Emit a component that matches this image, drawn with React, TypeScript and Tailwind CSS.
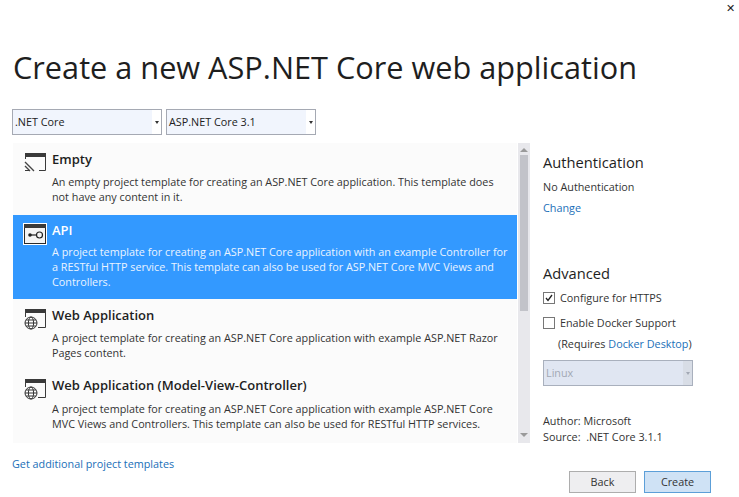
const font = "font-['Open_Sans','Noto_Sans',sans-serif]";

function TemplateIcon({ kind }: { kind: "empty" | "api" | "web" }) {
  if (kind === "api") {
    return (
      <svg width="24" height="22" viewBox="0 0 24 22" className="bg-white">
        <rect x="1.5" y="1.5" width="21" height="19" fill="#f4f4f4" stroke="#2a2a2a" />
        <rect x="1" y="1" width="22" height="4" fill="#3a3a3a" />
        <circle cx="7" cy="12" r="1.8" fill="#222" />
        <path d="M8 12h6" stroke="#222" strokeWidth="1.2" />
        <circle cx="16.5" cy="12" r="3" fill="none" stroke="#222" strokeWidth="1.2" />
      </svg>
    );
  }
  if (kind === "empty") {
    return (
      <svg width="24" height="20" viewBox="0 0 24 20">
        <rect x="2" y="1" width="21" height="4" fill="#3a3a3a" />
        <path d="M2.5 5v2M22.5 5v13.5H16M2 18.5h5" stroke="#3a3a3a" fill="none" />
        <path d="M2 10l9 9M2 14l5 5" stroke="#444" strokeWidth="1.4" fill="none" />
      </svg>
    );
  }
  return (
    <svg width="24" height="22" viewBox="0 0 24 22">
      <rect x="2" y="1" width="21" height="4" fill="#3a3a3a" />
      <path d="M2.5 5v4M22.5 5v14.5H15" stroke="#3a3a3a" fill="none" />
      <g stroke="#333" fill="#fff" strokeWidth="1">
        <circle cx="8" cy="15" r="6" />
        <ellipse cx="8" cy="15" rx="2.6" ry="6" fill="none" />
        <path d="M2 15h12M3 12h10M3 18h10" fill="none" />
      </g>
    </svg>
  );
}

function Template({
  kind,
  title,
  lines,
  selected,
  className,
  gap,
}: {
  kind: "empty" | "api" | "web";
  title: string;
  lines: string[];
  selected?: boolean;
  className: string;
  gap: string;
}) {
  return (
    <div className={`flex pl-[10px] pr-2 ${className} ${selected ? "bg-[#3399ff] text-white" : "text-[#333]"}`}>
      <div className="w-[29px] shrink-0 pt-[2px]">
        <TemplateIcon kind={kind} />
      </div>
      <div className="min-w-0">
        <div className={`text-[13px] leading-[18px] font-semibold ${selected ? "text-white" : "text-[#1e1e1e]"}`}>{title}</div>
        <div className={`${gap} text-[10.8px] leading-[15px] whitespace-nowrap ${selected ? "text-[#eaf4ff]" : ""}`}>
          {lines.map((l) => (
            <div key={l}>{l}</div>
          ))}
        </div>
      </div>
    </div>
  );
}

function Dropdown({ label, width }: { label: string; width: string }) {
  return (
    <div className={`flex h-[26px] ${width} border border-[#a5a9b3] bg-white`}>
      <div className="flex flex-1 items-center bg-[#f1f5fd] pl-[2px] pt-[1px] text-[10.8px] text-[#222]">{label}</div>
      <div className="flex w-[9px] items-center justify-center">
        <div className="h-0 w-0 border-x-[2px] border-t-[3px] border-x-transparent border-t-[#333]" />
      </div>
    </div>
  );
}

export default function App() {
  return (
    <div className={`${font} relative h-[497px] w-[739px] overflow-hidden bg-white text-[#333]`}>
      <div className="absolute right-[4px] top-[3px] text-[11px] leading-[10px] text-[#222]">✕</div>

      <div className="px-[12px] pt-[44px]">
        <h1 className="h-[48px] pl-px text-[30.7px] leading-[46px] text-[#1e1e1e]">Create a new ASP.NET Core web application</h1>

        <div className="mt-[17px] flex gap-[4px]">
          <Dropdown label=".NET Core" width="w-[150px]" />
          <Dropdown label="ASP.NET Core 3.1" width="w-[150px]" />
        </div>

        <div className="mt-[8px] flex">
          <div className="flex h-[300px] w-[518px] pl-px">
            <div className="w-[504px] shrink-0 bg-[#fbfbfb]">
              <Template
                kind="empty"
                title="Empty"
                className="h-[72px] pt-[7px]"
                gap="mt-[6px]"
                lines={[
                  "An empty project template for creating an ASP.NET Core application. This template does",
                  "not have any content in it.",
                ]}
              />
              <Template
                kind="api"
                title="API"
                selected
                className="h-[84px] pt-[6px]"
                gap="mt-[5px]"
                lines={[
                  "A project template for creating an ASP.NET Core application with an example Controller for",
                  "a RESTful HTTP service. This template can also be used for ASP.NET Core MVC Views and",
                  "Controllers.",
                ]}
              />
              <Template
                kind="web"
                title="Web Application"
                className="h-[71px] pt-[7px]"
                gap="mt-[6px]"
                lines={[
                  "A project template for creating an ASP.NET Core application with example ASP.NET Razor",
                  "Pages content.",
                ]}
              />
              <Template
                kind="web"
                title="Web Application (Model-View-Controller)"
                className="h-[73px] pt-[6px]"
                gap="mt-[7px]"
                lines={[
                  "A project template for creating an ASP.NET Core application with example ASP.NET Core",
                  "MVC Views and Controllers. This template can also be used for RESTful HTTP services.",
                ]}
              />
            </div>
            <div className="ml-px flex w-[12px] shrink-0 flex-col items-center bg-[#e8e8ec]">
              <div className="mt-[5px] h-0 w-0 border-x-[4px] border-b-[4px] border-x-transparent border-b-[#9a9a9a]" />
              <div className="mt-[3px] h-[156px] w-[8px] bg-[#c2c3c9]" />
              <div className="mt-auto mb-[6px] h-0 w-0 border-x-[4px] border-t-[4px] border-x-transparent border-t-[#9a9a9a]" />
            </div>
          </div>

          <div className="ml-[13px] w-[170px] text-[10.8px]">
            <div className="mt-[9px] text-[14.7px] leading-[20px] font-medium text-[#1e1e1e]">Authentication</div>
            <div className="mt-[7px] leading-[16px]">No Authentication</div>
            <div className="mt-[5px] leading-[16px] text-[#1a6fb8]">Change</div>

            <div className="mt-[47px] text-[14.7px] leading-[20px] font-medium text-[#1e1e1e]">Advanced</div>
            <div className="mt-[7px] flex items-center gap-[5px] leading-[16px]">
              <div className="flex h-[12px] w-[12px] items-center justify-center border border-[#777] bg-white">
                <svg width="10" height="10" viewBox="0 0 10 10">
                  <path d="M2 5l2 2.5L8 2" stroke="#222" strokeWidth="1.3" fill="none" />
                </svg>
              </div>
              Configure for HTTPS
            </div>
            <div className="mt-[9px] flex items-center gap-[5px] leading-[16px]">
              <div className="h-[12px] w-[12px] border border-[#777] bg-white" />
              Enable Docker Support
            </div>
            <div className="mt-[5px] pl-[15px] leading-[16px]">
              (Requires <span className="text-[#1a6fb8]">Docker Desktop</span>)
            </div>
            <div className="mt-[8px] flex h-[26px] w-[150px] border border-[#a9b0bd] bg-[#e0e6f2]">
              <div className="flex flex-1 items-center pl-[2px] text-[#a2a8b4]">Linux</div>
              <div className="flex w-[9px] items-center justify-center bg-[#d8dde6]">
                <div className="h-0 w-0 border-x-[2px] border-t-[3px] border-x-transparent border-t-[#a2a8b4]" />
              </div>
            </div>
            <div className="mt-[27px] leading-[16px]">Author: Microsoft</div>
            <div className="leading-[16px]">
              Source:&nbsp; .NET Core 3.1.1
            </div>
          </div>
        </div>

        <div className="flex items-start justify-between pr-[16px]">
          <div className="mt-[11px] text-[10.8px] leading-[16px] text-[#1a6fb8]">Get additional project templates</div>
          <div className="mt-[26px] flex gap-[8px] text-[10.8px]">
            <div className="flex h-[22px] w-[67px] items-center justify-center border border-[#adadad] bg-[#eeeef0]">Back</div>
            <div className="flex h-[22px] w-[67px] items-center justify-center border border-[#5c9fd8] bg-[#cfe2f5]">Create</div>
          </div>
        </div>
      </div>
    </div>
  );
}
